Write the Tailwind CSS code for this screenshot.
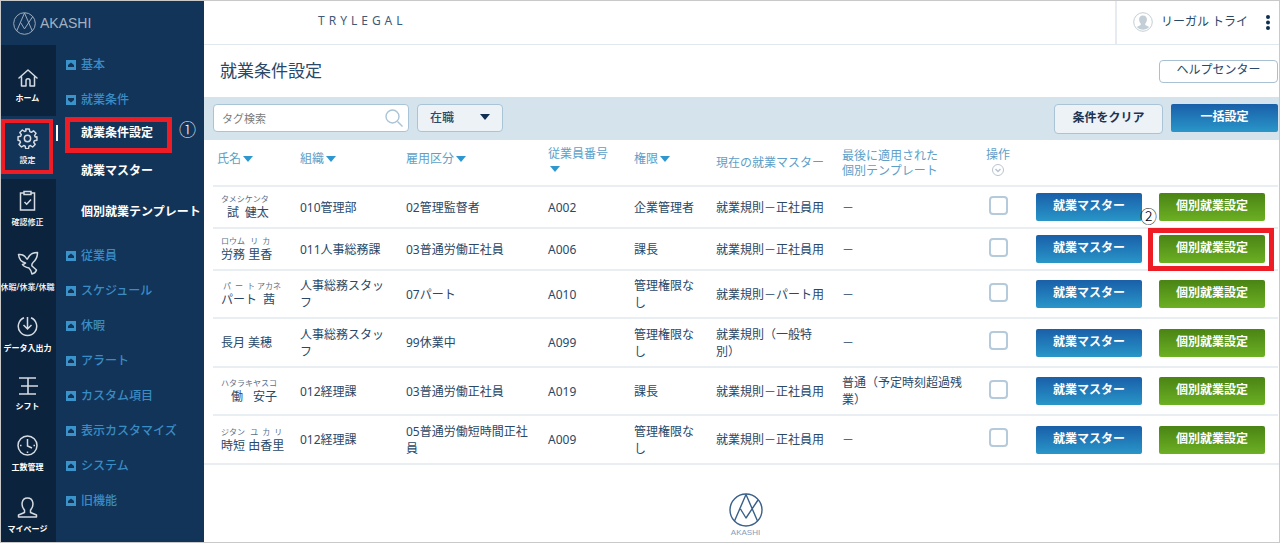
<!DOCTYPE html>
<html lang="ja">
<head>
<meta charset="utf-8">
<meta name="viewport" content="width=device-width, initial-scale=1">
<title>就業条件設定 - AKASHI</title>
<script src="https://cdn.jsdelivr.net/npm/@tailwindcss/browser@4"></script>
</head>
<body class="flex min-h-screen border border-[#c9c9c9] bg-white font-['Noto_Sans','Noto_Sans_CJK_JP',sans-serif] text-xs text-[#2a4868]">

<svg class="hidden" aria-hidden="true">
  <symbol id="logo" viewBox="0 0 34 34"><g fill="none" stroke="currentColor" stroke-width="1.400" stroke-linejoin="round"><circle cx="17" cy="17" r="16"/><path d="M5.500 28 17 1.500 28.500 28M11.500 16l5.500 9L29 7"/></g></symbol>
  <symbol id="up" viewBox="0 0 10 10"><path fill="#3a93cb" d="M0 0h10v10H0z"/><path fill="#123459" d="M2 7V5l3-2.500L8 5v2z"/></symbol>
  <symbol id="down" viewBox="0 0 10 10"><path fill="#3a93cb" d="M0 0h10v10H0z"/><path fill="#123459" d="M2 3h6v2L5 7.500 2 5z"/></symbol>
  <symbol id="tri" viewBox="0 0 10 6"><path fill="currentColor" d="M0 0h10L5 6z"/></symbol>
</svg>

<aside class="flex w-[203px] shrink-0 flex-col bg-[#123459]">
  <a href="#" class="flex h-[44px] items-center gap-1 pl-3 text-[#a3b1c2]">
    <svg class="size-[23px]"><use href="#logo"/></svg>
    <span class="font-['Liberation_Sans'] text-[14px]">AKASHI</span>
  </a>
  <div class="flex flex-1">
    <nav aria-label="メイン" class="w-[55px] shrink-0 bg-[#0c233d] text-[8px] font-bold leading-[12px] text-white">
      <ul>
        <li><a href="#" class="flex h-[71px] flex-col items-center pr-[2px] pt-[23px]">
          <svg class="size-5" viewBox="0 0 20 20" fill="none" stroke="#d5dbe2" stroke-width="1.500" stroke-linejoin="round" stroke-linecap="round"><path d="M1 10 10 2l9 8M3.500 8.500V18H8v-5.500c0-2.500 4-2.500 4 0V18h4.500V8.500"/></svg>
          <span class="mt-1">ホーム</span></a></li>
        <li class="relative bg-[#123459]"><a href="#" aria-current="page" class="flex h-[63px] flex-col items-center pr-[2px] pt-[12px]">
          <svg class="size-[21px]" viewBox="0 0 20 20" fill="none" stroke="#d5dbe2" stroke-width="1.400" stroke-linejoin="round"><circle cx="10" cy="10" r="3"/><path d="M8.300 1h3.400l.5 2.500 1.400.6 2.100-1.400 2.400 2.400-1.400 2.100.6 1.400L19 8.300v3.400l-2.500.5-.6 1.400 1.400 2.100-2.400 2.400-2.100-1.400-1.400.6-.5 2.500H8.300l-.5-2.500-1.400-.6-2.100 1.400-2.400-2.400 1.400-2.100-.6-1.400L1 11.700V8.300l2.500-.5.6-1.400-1.400-2.100 2.400-2.400 2.100 1.400 1.400-.6z"/></svg>
          <span class="mt-[5px] font-medium">設定</span></a>
          <span class="absolute right-[-2px] top-[9px] h-4 w-[2px] bg-white"></span>
          <span class="pointer-events-none absolute left-0 top-[3px] h-[55px] w-[52px] border-[4px] border-[#ee1c25]"></span></li>
        <li><a href="#" class="flex h-[61px] flex-col items-center pr-[2px] pt-[11px]">
          <svg class="size-[21px]" viewBox="0 0 21 21" fill="none" stroke="#d5dbe2" stroke-width="1.500"><path d="M7 3H3.500v17h14V3H14M7 1.500h7v3H7zM7.500 12l2.200 2.200L14 9.500"/></svg>
          <span class="mt-[5px] font-medium">確認修正</span></a></li>
        <li><a href="#" class="flex h-[65px] flex-col items-center pr-[2px] pt-[11px]">
          <svg class="h-[24px] w-[22px]" viewBox="0 0 22 24" fill="none" stroke="#d5dbe2" stroke-width="1.500" stroke-linejoin="round"><path d="M1.500 3.500C5 3 7.500 4 9.500 7.500c.5 1 1 .8 1.500-.5C12.500 3.500 16 1.500 20.500 1.500 20.500 5.500 19 9 16 11.500c-1.200 1.200-1.400 2.200-1 3.500l4.500 4c-.5 1.800-2.500 3.500-4.500 4-.5-2.500-1.500-4.500-3-6-2.500-.5-5.500-1.500-6.500-3.500 1.500-.3 2.500-.8 3-1.500C4.500 11 2 8 1.500 3.500z"/></svg>
          <span class="mt-[6px] whitespace-nowrap font-medium">休暇/休業/休職</span></a></li>
        <li><a href="#" class="flex h-[59px] flex-col items-center pr-[2px] pt-[11px]">
          <svg class="size-[21px]" viewBox="0 0 21 21" fill="none" stroke="#d5dbe2" stroke-width="1.500"><path d="M7 1.800a9.200 9.200 0 1 0 7 0M10.500 1v11.500M6.500 9l4 4 4-4"/></svg>
          <span class="mt-[5px] whitespace-nowrap">データ入出力</span></a></li>
        <li><a href="#" class="flex h-[60px] flex-col items-center pr-[2px] pt-[12px]">
          <svg class="size-5" viewBox="0 0 20 20" fill="none" stroke="#d5dbe2" stroke-width="1.600"><path d="M1 2h17M3 10h17M1 18h17M10 2v16"/></svg>
          <span class="mt-1">シフト</span></a></li>
        <li><a href="#" class="flex h-[62px] flex-col items-center pr-[2px] pt-[11px]">
          <svg class="size-[21px]" viewBox="0 0 21 21" fill="none" stroke="#d5dbe2" stroke-width="1.500"><circle cx="10.500" cy="10.500" r="9.500"/><path d="M10.500 4v7l4.500 2M3 10.500h1.500M16.500 10.500H18M10.500 16.500V18"/></svg>
          <span class="mt-[5px]">工数管理</span></a></li>
        <li><a href="#" class="flex flex-col items-center pr-[2px] pt-[11px]">
          <svg class="size-[21px]" viewBox="0 0 21 21" fill="none" stroke="#d5dbe2" stroke-width="1.500" stroke-linejoin="round"><path d="M7.500 13C3.800 9.500 4 1 10.500 1s6.700 8.500 3 12v2.500l6 2.500v2h-18v-2l6-2.500z"/></svg>
          <span class="mt-[5px] whitespace-nowrap">マイページ</span></a></li>
      </ul>
    </nav>
    <nav aria-label="設定メニュー" class="flex-1 pt-[2px] font-medium text-[#3a8cc4]">
      <ul class="pl-[10px]">
        <li><a href="#" class="flex h-[35px] items-center gap-[5px]"><svg class="size-[10px]"><use href="#up"/></svg>基本</a></li>
        <li><a href="#" class="flex h-[35px] items-center gap-[5px]"><svg class="size-[10px]"><use href="#down"/></svg>就業条件</a>
          <ul class="mb-[7px] pl-[15px] font-bold text-white">
            <li class="relative"><a href="#" class="flex h-8 items-center">就業条件設定</a>
              <span class="pointer-events-none absolute left-[-16px] top-0 h-[36px] w-[107px] border-[5px] border-[#ee1c25]"></span>
              <span class="absolute left-[98px] top-0 font-['Noto_Sans_CJK_JP'] text-[17px] font-light leading-6">①</span></li>
            <li><a href="#" class="flex h-11 items-center">就業マスター</a></li>
            <li><a href="#" class="flex h-[38px] items-center whitespace-nowrap">個別就業テンプレート</a></li>
          </ul></li>
        <li><a href="#" class="flex h-[35px] items-center gap-[5px]"><svg class="size-[10px]"><use href="#up"/></svg>従業員</a></li>
        <li><a href="#" class="flex h-[35px] items-center gap-[5px]"><svg class="size-[10px]"><use href="#up"/></svg>スケジュール</a></li>
        <li><a href="#" class="flex h-[35px] items-center gap-[5px]"><svg class="size-[10px]"><use href="#up"/></svg>休暇</a></li>
        <li><a href="#" class="flex h-[35px] items-center gap-[5px]"><svg class="size-[10px]"><use href="#up"/></svg>アラート</a></li>
        <li><a href="#" class="flex h-[35px] items-center gap-[5px]"><svg class="size-[10px]"><use href="#up"/></svg>カスタム項目</a></li>
        <li><a href="#" class="flex h-[35px] items-center gap-[5px]"><svg class="size-[10px]"><use href="#up"/></svg>表示カスタマイズ</a></li>
        <li><a href="#" class="flex h-[35px] items-center gap-[5px]"><svg class="size-[10px]"><use href="#up"/></svg>システム</a></li>
        <li><a href="#" class="flex h-[35px] items-center gap-[5px]"><svg class="size-[10px]"><use href="#up"/></svg>旧機能</a></li>
      </ul>
    </nav>
  </div>
</aside>

<div class="flex min-w-0 flex-1 flex-col">
  <header class="flex h-[44px] items-center justify-between border-b border-[#e1e8ee]">
    <span class="pb-1 pl-[114px] tracking-[4px] text-[#3f5a76]">TRYLEGAL</span>
    <div class="flex h-full w-[164px] items-center border-l-2 border-[#e6ebf1] pb-px pl-4">
      <svg class="size-5" viewBox="0 0 20 20"><circle cx="10" cy="10" r="9.300" fill="#fff" stroke="#c3ced6"/><path fill="#c3ced6" d="M10 3.500c5 0 4.500 6 2.300 8v1.500l4 2a8.500 8.500 0 0 1-12.600 0l4-2v-1.500C5.500 9.500 5 3.500 10 3.500z"/></svg>
      <span class="ml-2 whitespace-nowrap">リーガル トライ</span>
      <button type="button" aria-label="メニュー" class="ml-auto mr-[9px]"><svg class="h-[15px] w-1" viewBox="0 0 4 15" fill="#0f2f52"><circle cx="2" cy="2" r="2"/><circle cx="2" cy="7.500" r="2"/><circle cx="2" cy="13" r="2"/></svg></button>
    </div>
  </header>

  <div class="flex h-[52px] items-center justify-between pl-4 pr-px">
    <h1 class="text-[17px]">就業条件設定</h1>
    <a href="#" class="flex h-[23px] w-[119px] items-center justify-center rounded border border-[#a9c0d2] pb-[2px]">ヘルプセンター</a>
  </div>

  <form class="flex h-[43px] items-start gap-2 bg-[#d5e3ec] pl-[9px] pr-px pt-[7px]">
    <div class="relative">
      <input type="text" aria-label="タグ検索" placeholder="タグ検索" class="h-7 w-[196px] rounded border border-[#a9c4d6] bg-white pl-2 pr-8 text-[11px] placeholder:text-[#7b7b7b]">
      <svg class="absolute right-[6px] top-[5px] size-[18px]" viewBox="0 0 18 18" fill="none" stroke="#a9c4d6" stroke-width="1.400"><circle cx="7.500" cy="7.500" r="6.500"/><path d="m12.500 12.500 5 5"/></svg>
    </div>
    <div class="relative">
      <select aria-label="在職状況" class="h-7 w-[86px] appearance-none rounded border border-[#a9c4d6] bg-[#edf2f6] pl-3 text-xs font-medium"><option>在職</option></select>
      <svg class="pointer-events-none absolute right-[13px] top-[10px] h-[6px] w-[10px] text-[#0f2f52]"><use href="#tri"/></svg>
    </div>
    <button type="button" class="ml-auto h-[30px] w-[109px] rounded border border-[#a9c4d6] bg-[#edf2f6] pb-[2px] font-bold text-[#1c3453]">条件をクリア</button>
    <button type="button" class="h-7 w-[107px] rounded-xs bg-linear-to-b from-[#1a5fa9] to-[#2a96c8] pb-[2px] font-bold text-white">一括設定</button>
  </form>

  <div class="pl-[9px] pr-px">
    <table class="w-full table-fixed text-left leading-[17px]">
      <colgroup>
        <col class="w-[83px]"><col class="w-[106px]"><col class="w-[142px]"><col class="w-[86px]"><col class="w-[82px]"><col class="w-[126px]"><col><col class="w-[40px]"><col class="w-[133px]"><col class="w-[127px]">
      </colgroup>
      <thead class="leading-[15px] text-[#5d9fc9] [&_button]:cursor-pointer [&_svg]:inline [&_th]:pl-1 [&_th]:font-normal">
        <tr class="h-[46px] border-b-2 border-[#e8eef3]">
          <th scope="col"><button type="button" class="pb-2">氏名<svg class="mb-px ml-0.5 h-[6px] w-[10px] text-[#2f97d0]"><use href="#tri"/></svg></button></th>
          <th scope="col"><button type="button" class="pb-2">組織<svg class="mb-px ml-0.5 h-[6px] w-[10px] text-[#2f97d0]"><use href="#tri"/></svg></button></th>
          <th scope="col"><button type="button" class="pb-2">雇用区分<svg class="mb-px ml-0.5 h-[6px] w-[10px] text-[#2f97d0]"><use href="#tri"/></svg></button></th>
          <th scope="col"><button type="button" class="pb-1 text-left">従業員番号<br><svg class="mb-px ml-0.5 h-[6px] w-[10px] text-[#2f97d0]"><use href="#tri"/></svg></button></th>
          <th scope="col"><button type="button" class="pb-2">権限<svg class="mb-px ml-0.5 h-[6px] w-[10px] text-[#2f97d0]"><use href="#tri"/></svg></button></th>
          <th scope="col">現在の就業マスター</th>
          <th scope="col">最後に適用された<br>個別テンプレート</th>
          <th scope="col" class="text-center"><button type="button" class="w-full whitespace-nowrap pr-1">操作<br><svg class="mb-[2px] size-3" viewBox="0 0 12 12" fill="none" stroke="#b8c4cd"><circle cx="6" cy="6" r="5.500"/><path stroke-width="1.500" d="m3.500 5 2.500 2.500L8.500 5"/></svg></button></th>
          <td></td><td></td>
        </tr>
      </thead>
      <tbody class="[&_button]:h-7 [&_button]:w-[106px] [&_button]:rounded-xs [&_button]:bg-linear-to-b [&_button]:pb-[3px] [&_button]:font-bold [&_button]:text-white [&_input]:mx-auto [&_input]:mb-1 [&_input]:block [&_input]:size-[19px] [&_input]:appearance-none [&_input]:rounded [&_input]:border-2 [&_input]:border-[#b5cadb] [&_rt]:pb-[2px] [&_rt]:text-[8px] [&_rt]:leading-[12px] [&_rt]:text-[#5a7189] [&_tr]:border-b-2 [&_tr]:border-[#e8eef1]">
        <tr class="h-[42px]">
          <td class="pl-2"><ruby>試<rt>タメシ</rt></ruby><ruby>健太<rt>ケンタ</rt></ruby></td>
          <td class="pl-1 pr-3">010管理部</td><td class="pl-1 pr-3">02管理監督者</td><td class="pl-1 pr-3">A002</td><td class="pl-1 pr-3">企業管理者</td><td class="pl-1 pr-3">就業規則－正社員用</td><td class="pl-1 pr-3">－</td>
          <td><input type="checkbox" aria-label="試 健太を選択"></td>
          <td class="pl-[18px]"><button type="button" class="from-[#1a5fa9] to-[#2a96c8]">就業マスター</button></td>
          <td class="relative pl-2"><button type="button" class="from-[#4a8414] to-[#6cb023]">個別就業設定</button>
            <span class="absolute left-[-11px] top-[17px] font-['Noto_Sans_CJK_JP'] text-[17px] font-light leading-6 text-black">②</span></td>
        </tr>
        <tr class="h-[42px]">
          <td class="pl-2"><ruby>労務<rt>ロウム</rt></ruby> <ruby>里<rt>リ</rt></ruby><ruby>香<rt>カ</rt></ruby></td>
          <td class="pl-1 pr-3">011人事総務課</td><td class="pl-1 pr-3">03普通労働正社員</td><td class="pl-1 pr-3">A006</td><td class="pl-1 pr-3">課長</td><td class="pl-1 pr-3">就業規則－正社員用</td><td class="pl-1 pr-3">－</td>
          <td><input type="checkbox" aria-label="労務 里香を選択"></td>
          <td class="pl-[18px]"><button type="button" class="from-[#1a5fa9] to-[#2a96c8]">就業マスター</button></td>
          <td class="relative pl-2"><button type="button" class="from-[#4a8414] to-[#6cb023]">個別就業設定</button>
            <span class="pointer-events-none absolute left-[-3px] top-[-1px] h-[43px] w-[126px] border-[5px] border-[#ee1c25]"></span></td>
        </tr>
        <tr class="h-[48px]">
          <td class="pl-2"><ruby>パート<rt>パート</rt></ruby><ruby>茜<rt>アカネ</rt></ruby></td>
          <td class="pl-1 pr-3">人事総務スタッフ</td><td class="pl-1 pr-3">07パート</td><td class="pl-1 pr-3">A010</td><td class="pl-1 pr-3">管理権限なし</td><td class="pl-1 pr-3">就業規則－パート用</td><td class="pl-1 pr-3">－</td>
          <td><input type="checkbox" aria-label="パート 茜を選択"></td>
          <td class="pl-[18px]"><button type="button" class="from-[#1a5fa9] to-[#2a96c8]">就業マスター</button></td>
          <td class="pl-2"><button type="button" class="from-[#4a8414] to-[#6cb023]">個別就業設定</button></td>
        </tr>
        <tr class="h-[49px]">
          <td class="pl-2">長月 美穂</td>
          <td class="pl-1 pr-3">人事総務スタッフ</td><td class="pl-1 pr-3">99休業中</td><td class="pl-1 pr-3">A099</td><td class="pl-1 pr-3">管理権限なし</td><td class="pl-1 pr-3">就業規則（一般特別）</td><td class="pl-1 pr-3">－</td>
          <td><input type="checkbox" aria-label="長月 美穂を選択"></td>
          <td class="pl-[18px]"><button type="button" class="from-[#1a5fa9] to-[#2a96c8]">就業マスター</button></td>
          <td class="pl-2"><button type="button" class="from-[#4a8414] to-[#6cb023]">個別就業設定</button></td>
        </tr>
        <tr class="h-[48px]">
          <td class="pl-2"><ruby>働<rt>ハタラキ</rt></ruby><ruby>安子<rt>ヤスコ</rt></ruby></td>
          <td class="pl-1 pr-3">012経理課</td><td class="pl-1 pr-3">03普通労働正社員</td><td class="pl-1 pr-3">A019</td><td class="pl-1 pr-3">課長</td><td class="pl-1 pr-3">就業規則－正社員用</td><td class="pl-1 pr-3">普通（予定時刻超過残業）</td>
          <td><input type="checkbox" aria-label="働 安子を選択"></td>
          <td class="pl-[18px]"><button type="button" class="from-[#1a5fa9] to-[#2a96c8]">就業マスター</button></td>
          <td class="pl-2"><button type="button" class="from-[#4a8414] to-[#6cb023]">個別就業設定</button></td>
        </tr>
        <tr class="h-[49px]">
          <td class="pl-2"><ruby>時短<rt>ジタン</rt></ruby> <ruby>由<rt>ユ</rt></ruby><ruby>香<rt>カ</rt></ruby><ruby>里<rt>リ</rt></ruby></td>
          <td class="pl-1 pr-3">012経理課</td><td class="pl-1 pr-3">05普通労働短時間正社員</td><td class="pl-1 pr-3">A009</td><td class="pl-1 pr-3">管理権限なし</td><td class="pl-1 pr-3">就業規則－正社員用</td><td class="pl-1 pr-3">－</td>
          <td><input type="checkbox" aria-label="時短 由香里を選択"></td>
          <td class="pl-[18px]"><button type="button" class="from-[#1a5fa9] to-[#2a96c8]">就業マスター</button></td>
          <td class="pl-2"><button type="button" class="from-[#4a8414] to-[#6cb023]">個別就業設定</button></td>
        </tr>
      </tbody>
    </table>
  </div>
  <footer class="-mt-[2px] flex flex-col items-center border-t-2 border-[#e8eef1] pl-2 pt-7 text-[#3a608a]">
    <svg class="size-[34px]"><use href="#logo"/></svg>
    <span class="font-['Liberation_Sans'] text-[8px] leading-[12px] text-[#7f9dbb]">AKASHI</span>
  </footer>
</div>
</body>
</html>
